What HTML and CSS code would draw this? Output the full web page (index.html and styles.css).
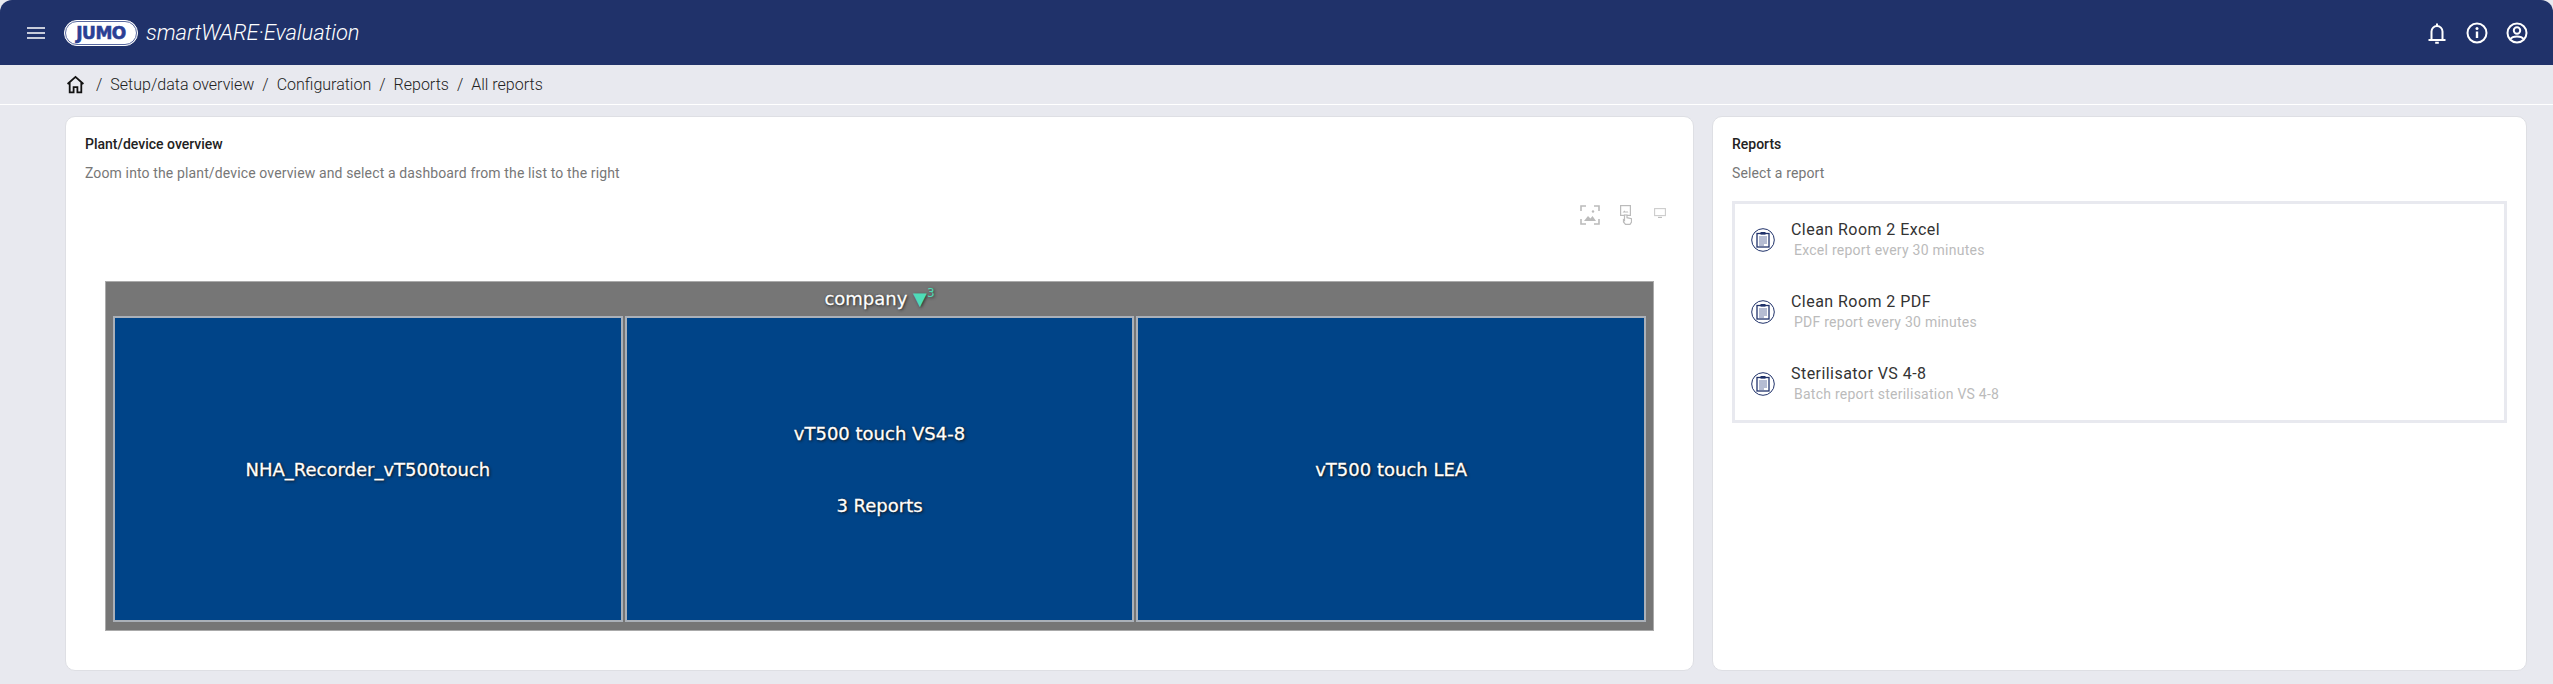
FILE: index.html
```html
<!DOCTYPE html>
<html>
<head>
    <title>JUMO smartWARE Evaluation</title>
    <link rel="stylesheet" href="styles.css">
</head>
<body>
    <div class="app">
        <header class="topbar">
            <svg class="menu-icon" viewBox="0 0 18 12"><path d="M0 1h18M0 6h18M0 11h18" stroke="#fff" stroke-width="1.700" fill="none"/></svg>
            <div class="logo"><span class="logo-text">JUMO</span></div>
            <span class="brand">smartWARE·Evaluation</span>
            <div class="topbar-icons">
                <svg class="top-icon" viewBox="0 0 24 24"><path d="M3.500 19h17M6.500 19v-8.500a5.500 5.500 0 0 1 11 0V19M12 2.500v2.500M10.200 21.800h3.600" stroke="#fff" stroke-width="2" fill="none"/></svg>
                <svg class="top-icon" viewBox="0 0 24 24"><circle cx="12" cy="12" r="9.500" stroke="#fff" stroke-width="2" fill="none"/><path d="M12 10.500v6.500" stroke="#fff" stroke-width="2.400"/><circle cx="12" cy="7.500" r="1.500" fill="#fff"/></svg>
                <svg class="top-icon" viewBox="0 0 24 24"><circle cx="12" cy="12" r="9.500" stroke="#fff" stroke-width="2" fill="none"/><circle cx="12" cy="9.500" r="3.200" stroke="#fff" stroke-width="2" fill="none"/><path d="M5.500 18c2-3.400 11-3.400 13 0" stroke="#fff" stroke-width="2" fill="none"/></svg>
            </div>
        </header>

        <nav class="crumbs">
            <svg class="home-icon" viewBox="0 0 18 18"><path d="M1.500 8.500 9 1.800l7.500 6.700M3.500 7v9.500h3.700v-5h3.600v5h3.700V7" stroke="#111" stroke-width="1.700" fill="none"/></svg>
            <span class="sep">/</span><span>Setup/data overview</span>
            <span class="sep">/</span><span>Configuration</span>
            <span class="sep">/</span><span>Reports</span>
            <span class="sep">/</span><span>All reports</span>
        </nav>

        <main class="content">
            <section class="card card-plant">
                <h2>Plant/device overview</h2>
                <p class="hint">Zoom into the plant/device overview and select a dashboard from the list to the right</p>
                <div class="tools">
                    <svg class="tool tool-fit" viewBox="0 0 20 20"><path d="M1 6V1h5M14 1h5v5M19 14v5h-5M6 19H1v-5" stroke="#bbb" stroke-width="1.600" fill="none"/><circle cx="13" cy="6.500" r="1.200" fill="#bbb"/><path d="M4 16l4-5 2.500 2.500L12.500 11l3.500 5z" fill="#bbb"/></svg>
                    <svg class="tool tool-point" viewBox="0 0 12 20"><rect x=".6" y=".6" width="9.800" height="9.800" fill="none" stroke="#bbb" stroke-width="1.200"/><path d="M2.500 7.500l2-2 1.500 1.500 1-1 1.500 1.500z" fill="#bbb"/><path d="M4.500 10v5.500l-1-.8v2.300l2 2.400h4.500l1.500-2.200v-3.500l-4.500-1V10z" fill="#fff" stroke="#bbb" stroke-width="1.200"/></svg>
                    <svg class="tool tool-screen" viewBox="0 0 12 10"><rect x=".6" y=".6" width="10.800" height="7" fill="none" stroke="#ccc" stroke-width="1.100"/><path d="M4 9.400h4" stroke="#bbb" stroke-width="1.100"/></svg>
                </div>
                <div class="treemap">
                    <div class="treemap-title">company <span class="marker">▼<sup>3</sup></span></div>
                    <div class="treemap-cells">
                        <div class="cell">NHA_Recorder_vT500touch</div>
                        <div class="cell cell-stack"><span>vT500 touch VS4-8</span><span>3 Reports</span></div>
                        <div class="cell">vT500 touch LEA</div>
                    </div>
                </div>
            </section>

            <section class="card card-reports">
                <h2>Reports</h2>
                <p class="hint">Select a report</p>
                <ul class="report-list">
                    <li class="report">
                        <svg class="report-icon" viewBox="0 0 24 24"><use href="#clip"/></svg>
                        <div><div class="report-name">Clean Room 2 Excel</div><div class="report-desc">Excel report every 30 minutes</div></div>
                    </li>
                    <li class="report">
                        <svg class="report-icon" viewBox="0 0 24 24"><use href="#clip"/></svg>
                        <div><div class="report-name">Clean Room 2 PDF</div><div class="report-desc">PDF report every 30 minutes</div></div>
                    </li>
                    <li class="report">
                        <svg class="report-icon" viewBox="0 0 24 24"><use href="#clip"/></svg>
                        <div><div class="report-name">Sterilisator VS 4-8</div><div class="report-desc">Batch report sterilisation VS 4-8</div></div>
                    </li>
                </ul>
            </section>
        </main>
    </div>

    <svg class="defs" width="0" height="0">
        <symbol id="clip" viewBox="0 0 24 24">
            <circle cx="12" cy="12" r="11.300" fill="none" stroke="#20326a" stroke-width="1"/>
            <rect x="6" y="5.500" width="12" height="13.500" fill="none" stroke="#20326a" stroke-width="1.300"/>
            <rect x="9.500" y="4" width="5" height="2.600" fill="#20326a"/>
            <path d="M8 9h8M8 11h8M8 13h8M8 15h8M8 17h5" stroke="#6d7aa6" stroke-width="1"/>
        </symbol>
    </svg>
</body>
</html>
```

FILE: styles.css
```css
html, body { margin: 0; padding: 0; height: 100%; background-color: #e8e9ef; }
body { font-family: Roboto, sans-serif; color: #333; overflow: hidden; }
.app { height: 684px; display: flex; flex-direction: column; }

.topbar {
    height: 65px; flex: none; display: flex; align-items: center; background-color: #20326a;
    border-radius: 12px 12px 0 0; padding: 0 24px 0 27px; box-sizing: border-box;
}
.menu-icon { width: 18px; height: 12px; margin-right: 19px; }
.logo {
    width: 74px; height: 26px; box-sizing: border-box; background-color: #fff; border: 1px solid #fff;
    outline: 1px solid #5a6aa0; outline-offset: -2px; border-radius: 13px; display: flex; align-items: center;
    justify-content: center; margin-right: 8px;
}
.logo-text { font-family: "DejaVu Sans", sans-serif; font-weight: bold; font-size: 17px; color: #2b3f94; letter-spacing: -0.5px; -webkit-text-stroke: 0.6px #2b3f94; }
.brand { font-family: Roboto, sans-serif; font-style: italic; font-weight: 300; font-size: 22px; color: #fff; letter-spacing: -0.1px; }
.topbar-icons { margin-left: auto; display: flex; gap: 16px; align-items: center; }
.top-icon { width: 24px; height: 24px; }

.crumbs {
    height: 40px; flex: none; box-sizing: border-box; border-bottom: 1px solid #fff; display: flex; align-items: center;
    padding-left: 66px; font-size: 16px; font-weight: 300; color: #222;
}
.home-icon { width: 19px; height: 19px; margin-right: 8px; }
.sep { margin: 0 8px 0 3px; }
.crumbs span + .sep { margin-left: 8px; }

.content { flex: none; display: flex; gap: 18px; padding: 11px 26px 0 65px; height: 556px; box-sizing: border-box; }
.card {
    background-color: #fff; border: 1px solid #dedfe4; border-radius: 10px; box-sizing: border-box;
    padding: 18px 19px; height: 555px;
}
.card-plant { width: 1629px; }
.card-reports { width: 815px; }
.card h2 { margin: 0; font-size: 14px; line-height: 18px; font-weight: 500; color: #222; }
.hint { margin: 11px 0 0; font-size: 14px; line-height: 18px; color: #777; letter-spacing: 0.13px; }

.tools { display: flex; justify-content: flex-end; align-items: flex-start; height: 76px; margin-top: 23px; padding-right: 8px; }
.tool-fit { width: 20px; height: 20px; margin-right: 20px; }
.tool-point { width: 12px; height: 20px; margin-right: 22px; }
.tool-screen { width: 12px; height: 10px; margin-top: 3px; }

.treemap {
    width: 1549px; height: 350px; margin-left: 20px; box-sizing: border-box; background-color: #767676;
    border: 1px solid #aaa; padding: 0 7px 8px; display: flex; flex-direction: column;
}
.treemap-title { height: 34px; flex: none; text-align: center; line-height: 33px; font-family: "DejaVu Sans", sans-serif; font-size: 18px; color: #fff; text-shadow: 1px 1px 3px #222, 0 0 1px #222; -webkit-text-stroke: 0.3px #fff; }
.marker { color: #4fdcb8; text-shadow: 1px 1px 3px #333; -webkit-text-stroke: 0; }
.marker sup { font-size: 12px; line-height: 0; vertical-align: 8px; }
.treemap-cells { flex: 1; display: flex; gap: 2px; }
.cell {
    flex: 1; background-color: #004488; border: 2px solid #aab0b8; box-sizing: border-box; display: flex; align-items: center;
    justify-content: center; font-family: "DejaVu Sans", sans-serif; font-size: 18px; color: #fff; text-shadow: 1px 1px 3px #111, 0 0 1px #111; -webkit-text-stroke: 0.3px #fff;
}
.cell-stack { flex-direction: column; gap: 51px; }

.report-list { list-style: none; margin: 19px 0 0; padding: 0; border: 3px solid #e8e9ef; }
.report { height: 72px; display: flex; align-items: center; padding-left: 16px; gap: 16px; }
.report-icon { width: 24px; height: 24px; flex: none; }
.report-name { font-size: 16px; line-height: 20px; letter-spacing: 0.45px; color: #333; }
.report-desc { font-size: 14px; line-height: 20px; letter-spacing: 0.25px; color: #bbb; padding-left: 3px; }
.defs { position: absolute; }
```
